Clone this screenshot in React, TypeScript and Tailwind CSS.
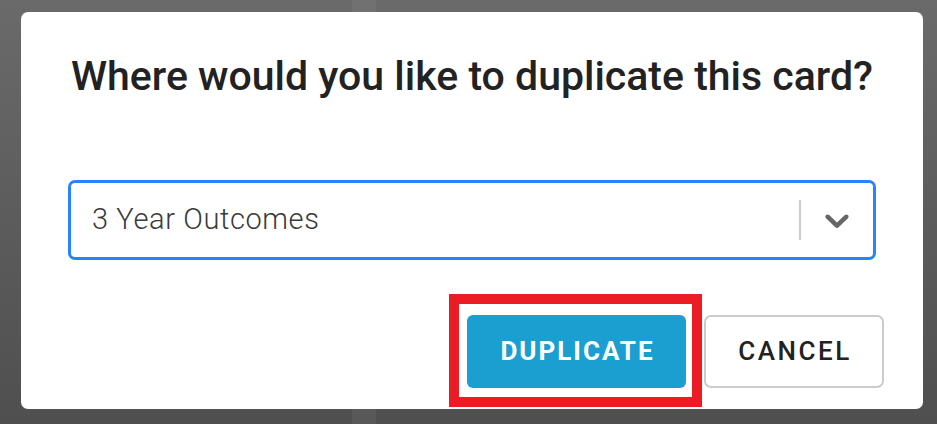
import React from 'react';

// Chevron used by the select's dropdown indicator
function ChevronDown() {
  return (
    <svg width="40" height="40" viewBox="0 0 20 20" fill="#666666" aria-hidden="true">
      <path d="M4.516 7.548c0.436-0.446 1.043-0.481 1.576 0l3.908 3.747 3.908-3.747c0.533-0.481 1.141-0.446 1.574 0 0.436 0.445 0.408 1.197 0 1.615-0.406 0.418-4.695 4.502-4.695 4.502-0.217 0.223-0.502 0.335-0.787 0.335s-0.57-0.112-0.789-0.335c0 0-4.287-4.084-4.695-4.502s-0.436-1.17 0-1.615z" />
    </svg>
  );
}

export default function App() {
  return (
    <div
      className="min-h-[424px] w-full pt-[12px] pl-[21px] bg-[linear-gradient(to_right,transparent_352px,rgba(255,255,255,0.05)_352px,rgba(255,255,255,0.05)_376px,transparent_376px),linear-gradient(#6a6a6a,#4f4f4f)]"
      style={{ fontFamily: 'Roboto, "Liberation Sans", sans-serif' }}
    >
      <div className="relative w-[902px] h-[397px] bg-white rounded-[7px] flex flex-col">
        <h2 className="pt-[40px] text-center text-[41px] leading-[48px] font-medium text-[#222222]">
          Where would you like to duplicate this card?
        </h2>

        {/* select control */}
        <div className="mt-[80px] mx-[47px] h-[80px] rounded-[7px] border-[3px] border-[#2684ff] flex items-center">
          <div className="flex-1 pl-[21px] text-[29px] font-light tracking-[0.6px] text-[#3a3a3a]">3 Year Outcomes</div>
          <div className="w-[2px] h-[40px] bg-[#cccccc]" />
          <div className="px-[16px] flex items-center">
            <ChevronDown />
          </div>
        </div>

        {/* actions */}
        <div className="mt-[55px] pr-[39px] flex justify-end items-center gap-[18px]">
          <button className="w-[219px] h-[73px] pl-[2px] rounded-[6px] bg-[#1a9fd0] text-white text-[26px] font-bold tracking-[2px]">
            DUPLICATE
          </button>
          <button className="w-[180px] h-[73px] pl-[2px] rounded-[7px] border-2 border-[#cccccc] bg-white text-[#222222] text-[26px] font-medium tracking-[2.5px]">
            CANCEL
          </button>
        </div>

        {/* highlight frame around the primary action */}
        <div className="absolute left-[428px] top-[282px] w-[253px] h-[113px] border-[10px] border-[#ec1c24]" />
      </div>
    </div>
  );
}
